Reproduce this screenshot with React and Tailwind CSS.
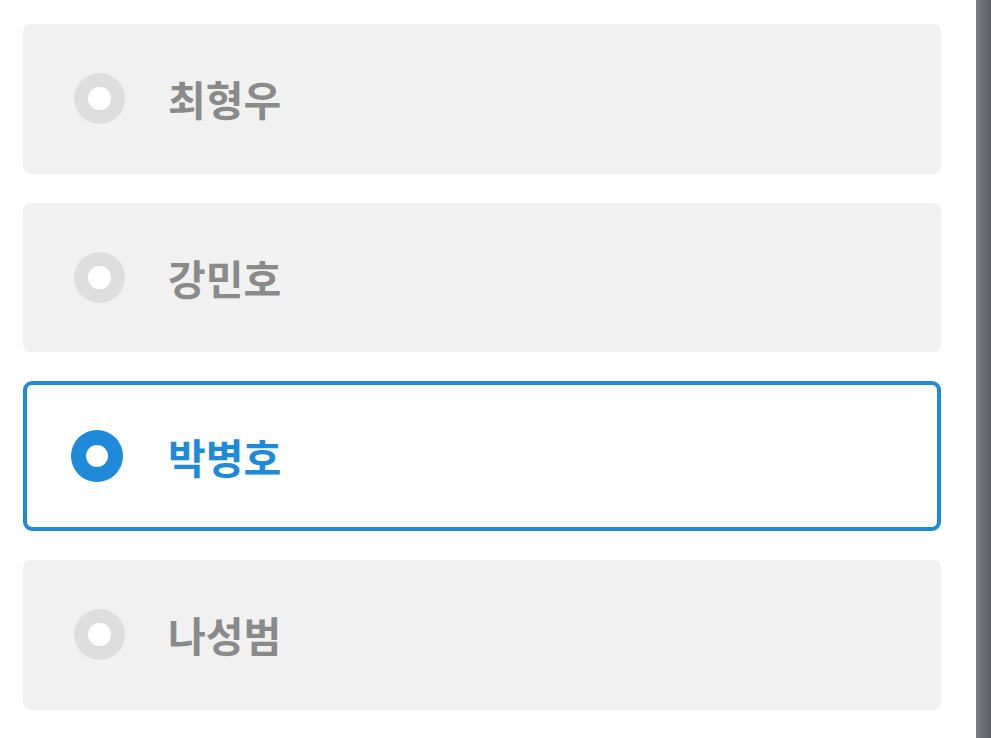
import React from "react";

const items = [
  { name: "최형우", selected: false },
  { name: "강민호", selected: false },
  { name: "박병호", selected: true },
  { name: "나성범", selected: false },
];

export default function App() {
  return (
    <div className="flex h-[738px] w-[991px] bg-white overflow-hidden" style={{ fontFamily: '"Noto Sans CJK KR", "Noto Sans", sans-serif' }}>
      <div className="flex flex-1 flex-col gap-[29.2px] pl-[23px] pr-[35px] pt-[24px]">
        {items.map((it) =>
          it.selected ? (
            <div key={it.name} className="flex h-[149.5px] items-center rounded-[9px] border-4 border-[#1f8ad9] bg-white pl-[44px]">
              <div className="flex h-[52px] w-[52px] items-center justify-center rounded-full bg-[#1f8ad9]">
                <div className="h-[22px] w-[22px] rounded-full bg-white" />
              </div>
              <span className="ml-[45px] text-[41px] font-semibold leading-none text-[#1f8ad9]">{it.name}</span>
            </div>
          ) : (
            <div key={it.name} className="flex h-[149.5px] items-center rounded-[8px] bg-[#f1f1f1] pl-[51px]">
              <div className="flex h-[51px] w-[51px] items-center justify-center rounded-full bg-[#dedede]">
                <div className="h-[23px] w-[23px] rounded-full bg-white" />
              </div>
              <span className="ml-[43px] text-[41px] font-semibold leading-none text-[#8a8a8a]">{it.name}</span>
            </div>
          )
        )}
      </div>
      <div className="h-full w-[15px] bg-gradient-to-r from-[#7d7d85] to-[#5c5c64]" />
    </div>
  );
}
